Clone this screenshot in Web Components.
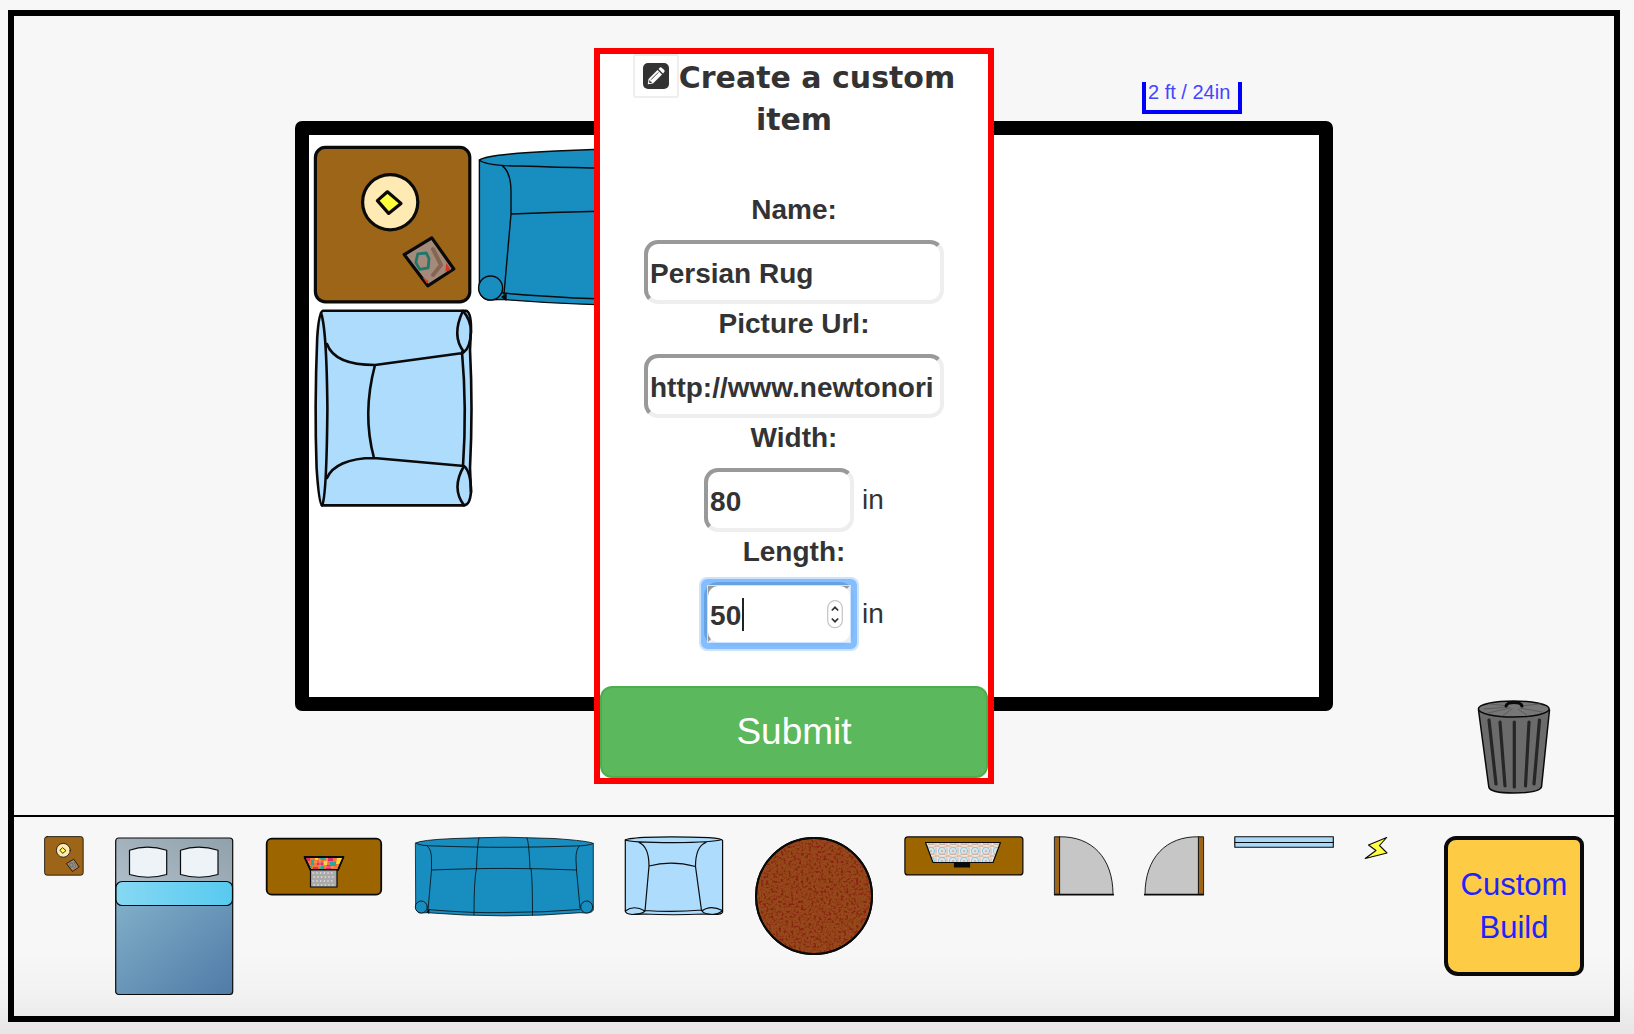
<!DOCTYPE html>
<html lang="en">
<head>
<meta charset="utf-8">
<title>Room planner</title>
<style>
  body { margin: 0; font-family: "Liberation Sans", Arial, sans-serif; color: #333; }
</style>
</head>
<body>
<room-planner></room-planner>

<script>
/* Drawings of every piece, in tray units. */
const INK = 'stroke="#0a0a0a" stroke-linejoin="round" stroke-linecap="round"';
const chair = `
  <path d="M1.3 4Q2 2.5 20 1.3Q50 .2 85 1.6Q98 2.4 98.6 4.500V76Q98 78.500 90 78.500L79 78Q50 79.500 20 78L8 78.500Q1.500 78 1.300 75Z" fill="#aedcfd"/>
  <path d="M1.300 4Q5 6.300 50 6.700Q90 6.300 97.500 3.500M15 6.500C21 9 25 17 25 30L21 75M82 6.500C75 9 71.500 17 71.500 30.500L77.500 74.500M25 30Q47 24 71.500 30.500M21 74.500Q50 76.500 78 74M1.300 75Q10 68.500 21 75Q18 78.500 8 78.500M78 75Q86 68.500 98.600 74.500Q94 78.500 88 78.500Q80 78 78 75" fill="none"/>`;
const pieces = {
  table: ['0 0 40 40', 40, 0.8, `
    <rect x=".6" y=".6" width="38.600" height="38.600" rx="2.500" fill="#9c6518"/>
    <circle cx="19.300" cy="14.300" r="6.900" fill="#ffeab4"/>
    <path d="M16.100 13.900L18.600 11.700L22 14.600L18.900 17.100Z" fill="#ffff3c"/>
    <path d="M22.800 27.400L29.700 23.200L35.200 31L28.700 35.200Z" fill="#a48a7b"/>
    <path d="M30 26l2 4-2 2.500" fill="none" stroke="#866551" stroke-width="1"/>
    <path d="M33.300 29.500l1.200 1.700-1.400.5zM27.300 33l1.600 1-.4.7z" fill="#d8361f" stroke="none"/>
    <path d="M26.200 27.200l2.100-.2.700 1.400-.2 2.300-2.100.4-1-1.700z" fill="none" stroke="#21786a" stroke-width=".7"/>`],
  bed: ['0 0 120 160', 120, 1.2, `
    <defs>
      <linearGradient id="a" x1="0" x2="1" y1="1" y2="0"><stop stop-color="#b6c3d0"/><stop offset="1" stop-color="#8fa1aa"/></linearGradient>
      <linearGradient id="b" x1="0" x2="1" y1="0" y2="1"><stop stop-color="#83b0c9"/><stop offset="1" stop-color="#4f7ba7"/></linearGradient>
      <linearGradient id="c"><stop stop-color="#86d8f4"/><stop offset="1" stop-color="#57caef"/></linearGradient>
    </defs>
    <rect x="1.700" y="2" width="117" height="70" rx="3" fill="url(#a)" stroke="none"/>
    <path d="M1.700 60H118.700V155Q118.700 158.500 116 158.500H5Q1.700 158.500 1.700 155Z" fill="url(#b)" stroke="none"/>
    <rect x="1.700" y="2" width="117" height="156.500" rx="3" fill="none"/>
    <path d="M15.500 14.300Q33 8 52.700 14.300V38.500Q34 44 15.500 38.500ZM66.500 14.300Q84 8 104 14.300V38.500Q85 44 66.500 38.500Z" fill="#edf3f6"/>
    <rect x="2" y="45.500" width="116.500" height="24" rx="6" fill="url(#c)"/>`],
  desk: ['0 0 120 60', 120, 1.8, `
    <rect x="2.700" y="2.700" width="114.500" height="56" rx="5" fill="#9c6500"/>
    <path d="M40.500 21H79.500L74 34H46.500Z" fill="#f37932"/>
    <g stroke="none">
      <path d="M42 22h4v3h-3zM53 25h6v4h-6zM64 22h5v3h-5zM49 31h5v2h-5zM62 29h5v4h-5z" fill="#e52b72"/>
      <path d="M47 24h3v5h-3zM56 22h5v2h-5zM66 26h6v4h-6zM55 30h5v3h-5zM46 30h2v2h-2z" fill="#29a6a0"/>
      <path d="M73 22h5l-3 6h-3zM60 25h3v4h-3zM51 22h3v2h-3z" fill="#f9d83c"/>
    </g>
    <path d="M50 26h12v5h7M56 23v9M63 22v5" fill="none" stroke="#ffc878" stroke-width=".6"/>
    <path d="M40.500 21H79.500L74 34H46.500Z" fill="none" stroke-width="1.200"/>
    <rect x="46.500" y="34" width="26.500" height="17" fill="#aaa" stroke-width="1.200"/>
    <path d="M49 37H71M50 41H71M49 45H71M50 49H71" stroke="#e2e2e2" stroke-width="1.300" stroke-dasharray=".5 3.200" fill="none"/>`],
  sofa: ['0 0 180 80', 180, 0.8, `
    <path d="M1.700 7Q6 4 40 2.500Q90 -.2 140 2.500Q176 5 179.300 7.500V74Q178 77 172 77L166 76.700Q90 83 13 76.700L6 77Q1.700 76 1.700 71Z" fill="#188dc0"/>
    <path d="M1.700 7Q5 10 22 10Q60 11.300 90 11.300Q125 11.300 160 10Q174 10 179.300 7.500M13 9.800Q17.700 13 17.500 24L17.500 34L14 74M165.500 9.800Q161.500 14 162 24L162.500 34L166 72M17.500 34Q60 32.400 90 32.400Q125 32.400 162.500 34M65 2Q63.500 5 62.500 32.500M113 2Q115 6 116 32.500M62.500 32.500Q60 42 60 78.800M117 32.500Q118.500 42 118.500 79M13 73.500Q60 77.500 90 76.500Q130 76.500 166 73.500" fill="none"/>
    <circle cx="7.300" cy="71" r="6" fill="#188dc0"/><circle cx="172.700" cy="71" r="6" fill="#188dc0"/>
    <path d="M13 75.500l2-1.500v3z" fill="#0a0a0a"/>`],
  chair: ['0 0 100 80', 100, 1.2, chair],
  'chair-side': ['0 0 80 100', 80, 1.2, `<g transform="translate(0 100) rotate(-90)">${chair}</g>`],
  rug: ['0 0 120 120', 120, 2, `
    <defs><filter id="n" x="0" y="0" width="1" height="1" color-interpolation-filters="sRGB">
      <feTurbulence type="fractalNoise" baseFrequency=".4" numOctaves="2" seed="4"/>
      <feColorMatrix values="0 0 0 0 .54  0 0 0 0 .13  0 0 0 0 .07  4 0 0 0 -1.900"/>
      <feComposite in2="SourceGraphic" operator="in"/>
    </filter></defs>
    <circle cx="60" cy="60" r="58" fill="#94491a"/>
    <circle cx="60" cy="60" r="57" fill="#000" stroke="none" filter="url(#n)"/>
    <circle cx="60" cy="60" r="58" fill="none"/>`],
  tv: ['0 0 120 40', 120, 1.2, `
    <defs><pattern id="p" width="11" height="10" patternUnits="userSpaceOnUse">
      <rect width="11" height="10" fill="#e4e9ea" stroke="none"/>
      <circle cx="5" cy="5" r="3.600" fill="none" stroke="#79bddb" stroke-width=".9"/>
      <circle cx="5" cy="5" r="1.500" fill="#c8bfb8" stroke="none"/>
      <path d="M0 0q5 3 11 0M0 10q5-4 11 0M10 2v6" fill="none" stroke="#dfa98d" stroke-width=".9"/>
    </pattern></defs>
    <rect x=".9" y=".9" width="118" height="38" rx="3" fill="#9c6500"/>
    <path d="M21.500 6.500H96.500L89 26.500H29Z" fill="url(#p)"/>
    <rect x="50.500" y="27" width="15" height="4" fill="#0a0a0a"/>`],
  'door-left': ['0 0 60 60', 60, 0.9, `
    <path d="M5.500 .8C38 0 59 22 59 58.500H5.500Z" fill="#c6c6c6"/>
    <rect x=".8" y=".8" width="4.800" height="57.700" fill="#9c6518"/>
    <path d="M.8 58.700H59.200" stroke-width="1.800"/>`],
  'door-right': ['0 0 60 60', 60, 0.9, `
    <g transform="translate(60 0) scale(-1 1)">
      <path d="M5.500 .8C38 0 59 22 59 58.500H5.500Z" fill="#c6c6c6"/>
      <rect x=".8" y=".8" width="4.800" height="57.700" fill="#9c6518"/>
      <path d="M.8 58.700H59.200" stroke-width="1.800"/></g>`],
  window: ['0 0 100 12', 100, 1.1, `
    <rect x=".8" y=".8" width="98.500" height="10.400" fill="#a8d8fa"/><path d="M.8 6.500H99.300"/>`],
  outlet: ['0 0 24 24', 24, 1.1, `
    <path d="M22.700 1.500L4.500 9L12 14.500L1.200 22.500L23 17L15.500 9.500Z" fill="#ffff46"/>`],
  trash: ['0 0 80 100', 80, 1.5, `
    <path d="M4.500 15L14.800 92Q16 98 40 98Q65 98 67.500 92L75.500 15Z" fill="#6b6b6b"/>
    <path d="M15 25L22 89M26 27L31 91M40.300 27V92M55 27L51.500 91M65.500 25L60 89" stroke="#262626" stroke-width="3.200"/>
    <ellipse cx="39.800" cy="14" rx="35.400" ry="8" fill="#777"/>
    <path d="M10 14L34 12M14 18L36 13M28 21L38 14M44 14L54 21M46 13L68 17M46 11L66 9M16 9L34 11" stroke="#5d5d5d" stroke-width="1"/>
    <path d="M32 11Q33 7.500 40 7.500Q47 7.500 48 11" fill="none" stroke-width="3"/>`],
};

class FurniturePiece extends HTMLElement {
  connectedCallback() {
    const [box, width, stroke, art] = pieces[this.getAttribute('kind')];
    const scale = Number(this.getAttribute('scale') || 1);
    const line = Number(this.getAttribute('line') || stroke);
    this.attachShadow({ mode: 'open' }).innerHTML = `
      <style>:host{display:block;flex:none} svg{display:block;overflow:visible}</style>
      <svg viewBox="${box}" width="${width * scale}" height="${box.split(' ')[3] * scale}" ${INK} stroke-width="${line}" aria-hidden="true">${art}</svg>`;
  }
}
customElements.define('furniture-piece', FurniturePiece);

class ScaleMark extends HTMLElement {
  constructor() {
    super();
    this.attachShadow({ mode: 'open' }).innerHTML = `
      <style>
        :host { display: block; box-sizing: border-box; width: 100px; height: 32px; padding-left: 2px;
          border: 4px solid #00f; border-top: 0; color: #4444ff; font-size: 20px; line-height: 20px; white-space: nowrap; }
      </style><slot></slot>`;
  }
}
customElements.define('scale-mark', ScaleMark);

class RoomCanvas extends HTMLElement {
  constructor() {
    super();
    this.attachShadow({ mode: 'open' }).innerHTML = `
      <style>
        :host { display: block; position: relative; box-sizing: border-box; overflow: hidden;
          border: 14px solid #000; border-radius: 7px; background: #fff; }
        furniture-piece { position: absolute; }
      </style>
      <furniture-piece kind="table" scale="4" style="left:4px;top:10px"></furniture-piece>
      <furniture-piece kind="sofa" scale="2" line="0.7" style="left:167px;top:11px"></furniture-piece>
      <furniture-piece kind="chair-side" scale="2" line="1.3" style="left:5px;top:173px"></furniture-piece>`;
  }
}
customElements.define('room-canvas', RoomCanvas);

class FormField extends HTMLElement {
  connectedCallback() {
    const type = this.getAttribute('type') || 'text';
    const unit = this.getAttribute('unit');
    const active = this.hasAttribute('active');
    this.attachShadow({ mode: 'open' }).innerHTML = `
      <style>
        :host { display: flex; flex-direction: column; align-items: center; gap: 10px; font-size: 28px; line-height: 40px; }
        label { font-weight: bold; }
        .row { display: flex; align-items: center; gap: 8px; }
        .box { position: relative; display: flex; }
        input { box-sizing: border-box; width: 300px; height: 64px; margin: 0; padding: 4px 2px 0; border: 4px solid;
          border-color: #999 #eee #eee #999; border-radius: 14px; background: #fff; color: #333; outline: 0;
          font: bold 28px "Liberation Sans", Arial, sans-serif; appearance: textfield; }
        input[type=number] { width: 150px; }
        input::-webkit-inner-spin-button { appearance: none; margin: 0; }
        .active::after { content: ""; position: absolute; inset: -3px; border: 6px solid rgba(85,165,255,.72);
          border-radius: 6px; box-shadow: 0 0 0 2px #cbe3ff, inset 0 0 0 1px #cbe3ff; pointer-events: none; }
        .caret { position: absolute; left: 38px; top: 16px; width: 2px; height: 33px; background: #222; }
        .spin { position: absolute; right: 11px; top: 18px; }
      </style>
      <label for="f">${this.getAttribute('label')}</label>
      <div class="row">
        <div class="box ${active ? 'active' : ''}">
          <input id="f" type="${type}" value="${this.getAttribute('value')}">
          ${active ? `<span class="caret"></span>
          <svg class="spin" width="16" height="29" viewBox="0 0 16 29" fill="none" aria-hidden="true">
            <rect x=".7" y=".7" width="14.600" height="27" rx="7.300" fill="#fff" stroke="#c4c4c4" stroke-width="1.200"/>
            <path d="M4.800 10.500L8 7.300L11.200 10.500M4.800 18.500L8 21.700L11.200 18.500" stroke="#333" stroke-width="1.700"/>
          </svg>` : ''}
        </div>
        ${unit ? `<span>${unit}</span>` : ''}
      </div>`;
  }
}
customElements.define('form-field', FormField);

class CustomItemDialog extends HTMLElement {
  constructor() {
    super();
    this.attachShadow({ mode: 'open' }).innerHTML = `
      <style>
        :host { display: block; box-sizing: border-box; width: 400px; border: 6px solid #f00; background: #fff; text-align: center; }
        h2 { margin: 0 0 49px; font: bold 30px/42px "DejaVu Sans", Verdana, sans-serif; }
        .icon { display: inline-flex; align-items: center; justify-content: center; box-sizing: border-box;
          width: 46px; height: 44px; border: 2px solid #eee; border-radius: 3px; vertical-align: -1px; }
        form { margin: 0; }
        button { display: block; box-sizing: border-box; width: 100%; height: 92px; margin: 40px 0 0; padding: 0;
          border: 2px solid #4cae4c; border-radius: 12px; background: #5cb85c; color: #fff;
          font: 37px "Liberation Sans", Arial, sans-serif; }
      </style>
      <h2><span class="icon"><svg width="26" height="26" viewBox="0 0 26 26" aria-hidden="true">
        <rect width="26" height="26" rx="5" fill="#333"/>
        <path d="M4.800 21.300L5.500 16L14.500 7L19 11.500L10 20.500Z" fill="#fff"/>
        <path d="M15.500 6L17 4.600Q18 4 19 4.900L21.200 7.100Q22 8 21.300 9L20 10.500Z" fill="#fff"/>
        <path d="M8 16.700L15.300 9.400" stroke="#333" stroke-width=".9"/>
        <path d="M6.800 17.500V19.300H8.600" fill="none" stroke="#333" stroke-width="1.200"/>
      </svg></span>Create a custom item</h2>
      <form>
        <form-field label="Name:" value="Persian Rug"></form-field>
        <form-field label="Picture Url:" value="http://www.newtonori"></form-field>
        <form-field label="Width:" type="number" value="80" unit="in"></form-field>
        <form-field label="Length:" type="number" value="50" unit="in" active></form-field>
        <button type="button">Submit</button>
      </form>`;
  }
}
customElements.define('custom-item-dialog', CustomItemDialog);

class FurnitureTray extends HTMLElement {
  constructor() {
    super();
    const kinds = ['table', 'bed', 'desk', 'sofa', 'chair', 'rug', 'tv', 'door-left', 'door-right', 'window', 'outlet'];
    this.attachShadow({ mode: 'open' }).innerHTML = `
      <style>
        :host { display: flex; align-items: flex-start; gap: 30px; box-sizing: border-box; padding: 19px 30px 20px; border-top: 2px solid #000; }
        button { box-sizing: border-box; flex: none; width: 140px; height: 140px; margin: 0 0 0 auto; padding: 0; border: 4px solid #0a0a0a;
          border-radius: 12px 9px 10px 14px; background: #fecb45; color: #2222ff;
          font: 31px/43px "Liberation Sans", Arial, sans-serif; }
      </style>
      ${kinds.map(k => `<furniture-piece kind="${k}"></furniture-piece>`).join('')}
      <button type="button">Custom<br>Build</button>`;
  }
}
customElements.define('furniture-tray', FurnitureTray);

class RoomPlanner extends HTMLElement {
  constructor() {
    super();
    this.attachShadow({ mode: 'open' }).innerHTML = `
      <style>
        :host { display: flex; position: relative; box-sizing: border-box; min-height: 100vh; padding: 10px 14px 12px 8px;
          background: linear-gradient(to top, #e6e6e6, #f2f2f2 40px, #f7f7f7 80px); }
        main { flex: 1; display: flex; flex-direction: column; border: 6px solid #000; min-width: 0; }
        .stage { flex: 1; display: grid; grid-template-columns: 1fr minmax(0, 1038px) 1fr; grid-template-rows: auto 590px 1fr; row-gap: 7px; padding-top: 66px; }
        scale-mark { grid-area: 1 / 2; justify-self: end; margin-right: 91px; }
        room-canvas { grid-area: 2 / 2; }
        .trash { grid-area: 1 / 3 / 4 / 4; place-self: end; margin: 0 60px 20px 0; }
        furniture-tray { height: 201px; }
        custom-item-dialog { position: absolute; top: 48px; left: calc(50% - 223px); }
      </style>
      <main>
        <div class="stage">
          <scale-mark>2 ft / 24in</scale-mark>
          <room-canvas></room-canvas>
          <furniture-piece class="trash" kind="trash"></furniture-piece>
        </div>
        <furniture-tray></furniture-tray>
      </main>
      <custom-item-dialog></custom-item-dialog>`;
  }
}
customElements.define('room-planner', RoomPlanner);
</script>
</body>
</html>
